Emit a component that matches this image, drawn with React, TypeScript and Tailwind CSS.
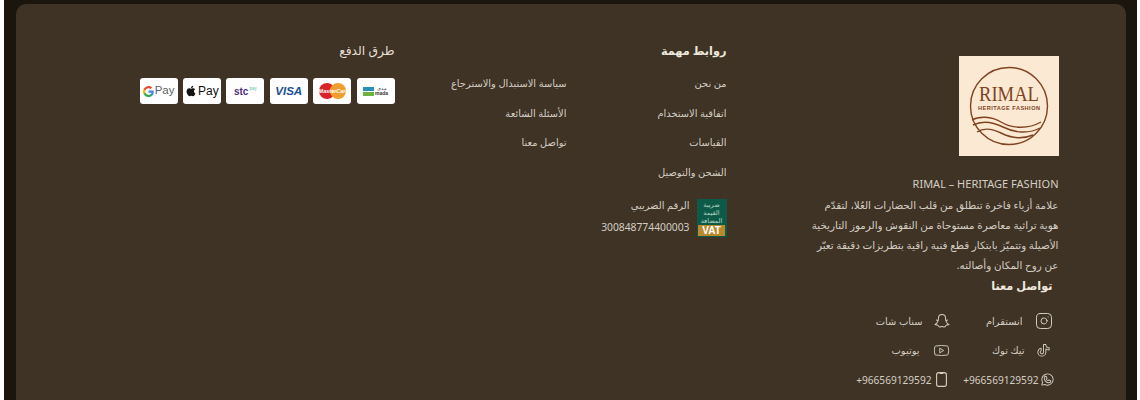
import { Instagram, Youtube } from 'lucide-react'
import { FaApple } from 'react-icons/fa'
import { PiSnapchatLogo, PiTiktokLogo, PiWhatsappLogo } from 'react-icons/pi'

const linksRight = ['من نحن', 'اتفاقية الاستخدام', 'القياسات', 'الشحن والتوصيل']
const linksLeft = ['سياسة الاستبدال والاسترجاع', 'الأسئلة الشائعة', 'تواصل معنا']

function Logo() {
  return (
    <div className="w-[100px] h-[100px] bg-[#fbe9d3]">
      <svg viewBox="0 0 100 100" className="w-full h-full">
        <circle cx="50" cy="50" r="38.5" fill="none" stroke="#80431f" strokeWidth="1.4" />
        <text x="50" y="45" textAnchor="middle" fill="#80431f" fontFamily="Liberation Serif, serif" fontSize="20" textLength="60" lengthAdjust="spacingAndGlyphs">RIMAL</text>
        <text x="50" y="54" textAnchor="middle" fill="#80431f" fontFamily="Liberation Sans, sans-serif" fontSize="5.6" fontWeight="700" textLength="62">HERITAGE FASHION</text>
        <path d="M13 64C20 60 32 60 42 66S68 74 82 66" fill="none" stroke="#80431f" strokeWidth="1.4" />
        <path d="M14 69C22 65 32 65 44 71S70 78 81 72" fill="none" stroke="#80431f" strokeWidth="1.4" />
        <path d="M18 76C24 72 32 72 42 77S62 84 74 79" fill="none" stroke="#80431f" strokeWidth="1.4" />
      </svg>
    </div>
  )
}

function VatBadge() {
  return (
    <div className="w-[30px] h-[38px] bg-[#0c5a47] flex flex-col items-center pt-[2px] shrink-0">
      <div className="text-[6.5px] leading-[8px] text-[#b9d8c6] text-center">
        ضريبة
        <br />
        القيمة
        <br />
        المضافة
      </div>
      <div className="w-[27px] h-[11px] mt-auto mb-[1px] bg-[#b98a2b] text-white text-[10px] leading-[11px] font-bold text-center font-['Liberation_Sans']" dir="ltr">
        VAT
      </div>
    </div>
  )
}

function PayCard({ children }: { children: React.ReactNode }) {
  return (
    <div className="w-[38px] h-[26px] bg-white rounded-[3px] flex items-center justify-center overflow-hidden font-['Liberation_Sans']" dir="ltr">
      {children}
    </div>
  )
}

function SocialItem({ icon, label, className, iconClass }: { icon: React.ReactNode; label: string; className?: string; iconClass?: string }) {
  return (
    <div className={`flex items-center ${className ?? ''}`}>
      <span className={`flex justify-center shrink-0 ${iconClass ?? 'w-[18px]'}`}>{icon}</span>
      <span>{label}</span>
    </div>
  )
}

function PhoneIcon() {
  return (
    <svg width="11" height="15" viewBox="0 0 11 15" fill="none" stroke="currentColor" strokeWidth="1.1">
      <rect x="0.6" y="0.6" width="9.8" height="13.8" rx="2.2" />
      <path d="M3.6 1.2h3.8" strokeWidth="1.6" />
    </svg>
  )
}

export default function App() {
  return (
    <div dir="rtl" className="h-[400px] overflow-hidden bg-white px-[3.5px] font-['Noto_Sans','DejaVu_Sans',sans-serif]">
      <div className="h-full bg-[#1a160e] pt-1 pr-[11px] pl-[12.5px]">
        <div className="h-[420px] bg-[#3f3326] rounded-[10px] pt-[37px] pr-[67px] grid grid-cols-[332px_332px_1fr] text-[#d4cec3] text-[9.9px]">
          {/* brand + contact */}
          <div>
            <div className="mt-[15px]">
              <Logo />
            </div>
            <p className="mt-[18px] text-[11px] leading-[20px]" dir="ltr">
              <span className="block text-right">RIMAL – HERITAGE FASHION</span>
            </p>
            <p className="text-[10.35px] leading-[20.3px] mt-[0.5px] whitespace-nowrap">
              علامة أزياء فاخرة تنطلق من قلب الحضارات العُلا، لتقدّم
              <br />
              هوية تراثية معاصرة مستوحاة من النقوش والرموز التاريخية
              <br />
              الأصيلة وتتميّز بابتكار قطع فنية راقية بتطريزات دقيقة تعبّر
              <br />
              عن روح المكان وأصالته.
            </p>
            <div className="pr-[6px]">
              <h3 className="text-[11.3px] leading-[20px] font-bold text-[#eee8dd]">تواصل معنا</h3>
              <div className="mt-[15px] grid grid-cols-[102px_auto] justify-start gap-y-[9.5px] leading-[20px]">
                <SocialItem icon={<Instagram size={18} strokeWidth={1.3} />} label="انستقرام" className="gap-[12px]" />
                <SocialItem icon={<PiSnapchatLogo size={16} />} label="سناب شات" className="gap-[10px]" />
                <SocialItem icon={<PiTiktokLogo size={15} />} label="تيك توك" className="gap-[10px]" />
                <SocialItem icon={<Youtube size={17} strokeWidth={1.3} />} label="يوتيوب" className="gap-[13px]" />
                <SocialItem icon={<PiWhatsappLogo size={15} className="max-w-none shrink-0" />} label="966569129592+" className="gap-[4px] text-[10.15px]" iconClass="w-[10px]" />
                <SocialItem icon={<PhoneIcon />} label="966569129592+" className="gap-[1px] text-[10.15px]" />
              </div>
            </div>
          </div>

          {/* links */}
          <div>
            <h3 className="text-[11.3px] leading-[20px] font-bold text-[#eee8dd]">روابط مهمة</h3>
            <div className="mt-[12px] grid grid-cols-[160px_auto] justify-start">
              <div className="flex flex-col gap-[9.5px] leading-[20px]">
                {linksRight.map((l) => (
                  <span key={l}>{l}</span>
                ))}
              </div>
              <div className="flex flex-col gap-[9.5px] leading-[20px]">
                {linksLeft.map((l) => (
                  <span key={l}>{l}</span>
                ))}
              </div>
            </div>
            <div className="mt-[13px] flex items-center gap-[7px]">
              <VatBadge />
              <div className="leading-[20px] mb-[5px]">
                <div>الرقم الضريبي</div>
                <div className="mt-[2px] text-[10.3px]">300848774400003</div>
              </div>
            </div>
          </div>

          {/* payment */}
          <div>
            <h3 className="text-[12.3px] leading-[20px] font-normal text-[#e4ded3]">طرق الدفع</h3>
            <div className="mt-[17px] flex gap-[5.4px]">
              <PayCard>
                <div className="flex items-center gap-[1px]">
                  <div className="flex flex-col gap-[1px]">
                    <span className="block w-[11px] h-[4px] bg-[#2a8fb5]" />
                    <span className="block w-[11px] h-[4px] bg-[#6cb33f]" />
                  </div>
                  <div className="flex flex-col items-center">
                    <span className="text-[5px] leading-[5px] text-[#333]">مدى</span>
                    <span className="text-[5px] leading-[5px] font-bold text-[#333]">mada</span>
                  </div>
                </div>
              </PayCard>
              <PayCard>
                <div className="relative w-[27px] h-[16px]">
                  <span className="absolute left-0 top-0 w-[16px] h-[16px] rounded-full bg-[#d9222a]" />
                  <span className="absolute right-0 top-0 w-[16px] h-[16px] rounded-full bg-[#ee9f2d]" />
                  <span className="absolute inset-0 text-[5.5px] leading-[16px] text-white font-bold text-center italic">MasterCard</span>
                </div>
              </PayCard>
              <PayCard>
                <span className="text-[11.6px] font-black italic text-[#1a4f96]">VISA</span>
              </PayCard>
              <PayCard>
                <span className="text-[10px] font-bold text-[#4f2d7f]">stc</span>
                <span className="text-[4.5px] text-[#4fc3a1] ml-[1px] mb-[3px]">pay</span>
              </PayCard>
              <PayCard>
                <div className="flex items-center text-[#111]">
                  <FaApple size={12} />
                  <span className="text-[12px] font-medium ml-[1px]">Pay</span>
                </div>
              </PayCard>
              <PayCard>
                <div className="flex items-center">
                  <svg width="11" height="11" viewBox="0 0 24 24">
                    <path fill="#4285F4" d="M23.5 12.3c0-.8-.1-1.600-.2-2.300H12v4.500h6.500a5.500 5.500 0 0 1-2.400 3.600v3h3.900c2.200-2.100 3.500-5.200 3.500-8.800z" />
                    <path fill="#34A853" d="M12 24c3.200 0 6-1.100 8-2.900l-3.900-3c-1.100.7-2.500 1.200-4.100 1.200-3.100 0-5.800-2.100-6.700-5H1.300v3.100A12 12 0 0 0 12 24z" />
                    <path fill="#FBBC05" d="M5.300 14.300a7.200 7.200 0 0 1 0-4.600V6.600h-4a12 12 0 0 0 0 10.800z" />
                    <path fill="#EA4335" d="M12 4.800c1.800 0 3.300.6 4.600 1.800l3.400-3.400A12 12 0 0 0 1.300 6.600l4 3.100c.9-2.900 3.600-4.900 6.700-4.900z" />
                  </svg>
                  <span className="text-[11.5px] text-[#5f6368] ml-[1px]">Pay</span>
                </div>
              </PayCard>
            </div>
          </div>
        </div>
      </div>
    </div>
  )
}
